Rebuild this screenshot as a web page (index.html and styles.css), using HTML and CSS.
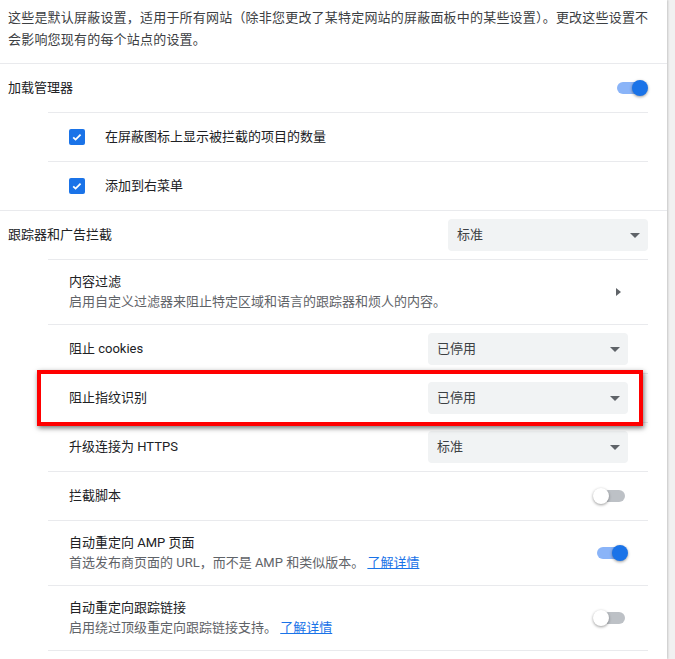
FILE: index.html
```html
<!DOCTYPE html>
<html lang="zh-CN">
  <head>
    <meta charset="utf-8" />
    <meta name="viewport" content="width=device-width, initial-scale=1" />
    <title>屏蔽设置</title>
    <link rel="stylesheet" href="styles.css">
  </head>
  <body>
    <!-- Settings card -->
    <div class="card">
      <p class="intro">这些是默认屏蔽设置，适用于所有网站（除非您更改了某特定网站的屏蔽面板中的某些设置）。更改这些设置不会影响您现有的每个站点的设置。</p>

      <!-- Ads manager -->
      <div class="row">
        <span class="label">加载管理器</span>
        <span class="toggle on"><span class="knob"></span></span>
      </div>
      <div class="sub">
        <div class="row check-row">
          <span class="checkbox">
            <svg width="16" height="16" viewBox="0 0 16 16"><path d="M4.2 8.3l2.4 2.3 5-5" fill="none" stroke="#fff" stroke-width="1.8" /></svg>
          </span>
          <span class="label">在屏蔽图标上显示被拦截的项目的数量</span>
        </div>
        <div class="row check-row">
          <span class="checkbox">
            <svg width="16" height="16" viewBox="0 0 16 16"><path d="M4.2 8.3l2.4 2.3 5-5" fill="none" stroke="#fff" stroke-width="1.8" /></svg>
          </span>
          <span class="label">添加到右菜单</span>
        </div>
      </div>

      <!-- Trackers and ads -->
      <div class="row">
        <span class="label">跟踪器和广告拦截</span>
        <div class="select"><span>标准</span><span class="arrow"></span></div>
      </div>
      <div class="sub">
        <div class="row two-line">
          <div>
            <div class="label">内容过滤</div>
            <div class="secondary">启用自定义过滤器来阻止特定区域和语言的跟踪器和烦人的内容。</div>
          </div>
          <span class="subpage-arrow"></span>
        </div>
        <div class="row">
          <span class="label">阻止 cookies</span>
          <div class="select"><span>已停用</span><span class="arrow"></span></div>
        </div>
        <div class="row marked">
          <span class="label">阻止指纹识别</span>
          <div class="select"><span>已停用</span><span class="arrow"></span></div>
          <span class="highlight"></span>
        </div>
        <div class="row">
          <span class="label">升级连接为 HTTPS</span>
          <div class="select"><span>标准</span><span class="arrow"></span></div>
        </div>
        <div class="row">
          <span class="label">拦截脚本</span>
          <span class="toggle"><span class="knob"></span></span>
        </div>
        <div class="row two-line">
          <div>
            <div class="label">自动重定向 AMP 页面</div>
            <div class="secondary">首选发布商页面的 URL，而不是 AMP 和类似版本。 <a href="#">了解详情</a></div>
          </div>
          <span class="toggle on"><span class="knob"></span></span>
        </div>
        <div class="row two-line last">
          <div>
            <div class="label">自动重定向跟踪链接</div>
            <div class="secondary">启用绕过顶级重定向跟踪链接支持。 <a href="#">了解详情</a></div>
          </div>
          <span class="toggle"><span class="knob"></span></span>
        </div>
      </div>
    </div>
  </body>
</html>
```

FILE: styles.css
```css
/* Page */
html {
  overflow: hidden;
}

body {
  margin: 0;
  background: #f1f1f1;
  font-family: Roboto, "Noto Sans CJK SC", sans-serif;
  font-size: 13px;
  color: #202124;
}

/* Settings card */
.card {
  width: 667px;
  min-height: 659px;
  background: #fff;
  box-shadow: 1px 0 2px rgba(0, 0, 0, 0.18);
}

.intro {
  margin: 0;
  padding: 7px 13px 12px 8px;
  line-height: 22px;
  letter-spacing: 0.2px;
  color: #3c4043;
}

/* Rows */
.row {
  display: flex;
  align-items: center;
  justify-content: space-between;
  min-height: 48px;
  padding: 0 19px 0 8px;
  border-top: 1px solid #e9eaed;
  line-height: 20px;
}

.sub {
  margin: 0 19px 0 48px;
}

.sub .row {
  padding: 0 20px 0 21px;
}

.sub .row.last {
  border-bottom: 1px solid #e9eaed;
}

.two-line {
  min-height: 64px;
}

.secondary {
  color: #5f6368;
}

.secondary a {
  color: #1a73e8;
}

/* Checkbox rows */
.check-row {
  justify-content: flex-start;
  gap: 20px;
}

.checkbox {
  width: 16px;
  height: 16px;
  border-radius: 2px;
  background: #1a73e8;
}

.checkbox svg {
  display: block;
}

/* Toggles */
.toggle {
  position: relative;
  width: 28px;
  height: 12px;
  margin-right: 3px;
  border-radius: 6px;
  background: #bdc1c6;
}

.toggle .knob {
  position: absolute;
  top: -2px;
  left: -4px;
  width: 16px;
  height: 16px;
  border-radius: 50%;
  background: #fff;
  box-shadow: 0 1px 3px rgba(0, 0, 0, 0.4);
}

.toggle.on {
  background: #8ab4f8;
}

.toggle.on .knob {
  left: auto;
  right: -3px;
  background: #1a73e8;
}

/* Selects */
.select {
  display: flex;
  align-items: center;
  justify-content: space-between;
  width: 200px;
  height: 32px;
  box-sizing: border-box;
  padding: 0 8px 0 9px;
  border-radius: 4px;
  background: #f1f3f4;
  color: #3c4043;
}

.arrow {
  width: 0;
  height: 0;
  border-left: 5px solid transparent;
  border-right: 5px solid transparent;
  border-top: 5px solid #5f6368;
}

.subpage-arrow {
  width: 0;
  height: 0;
  margin-right: 7px;
  border-top: 4px solid transparent;
  border-bottom: 4px solid transparent;
  border-left: 5px solid #5f6368;
}

/* Red highlight round the fingerprint row */
.marked {
  position: relative;
}

.highlight {
  position: absolute;
  top: -4px;
  bottom: -4px;
  left: -11px;
  right: 5px;
  border: 4px solid #ff0000;
  box-shadow: 1px 2px 5px rgba(0, 0, 0, 0.55);
}
```
